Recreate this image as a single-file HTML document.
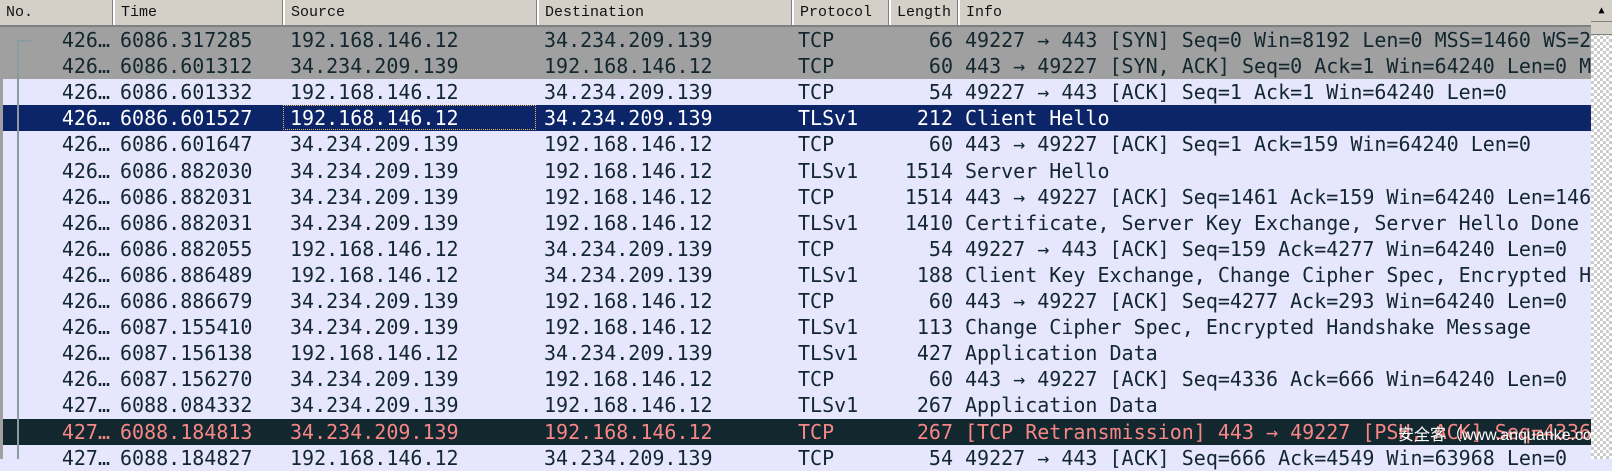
<!DOCTYPE html>
<html><head><meta charset="utf-8"><style>
body{margin:0;width:1612px;height:459px;overflow:hidden;background:#e6e6fe;position:relative;font-family:"DejaVu Sans Mono","Liberation Mono",monospace}
#hdr{position:absolute;left:0;top:0;width:1591px;height:25px;background:#d4d0c8;border-bottom:2px solid #808080;font-family:"Liberation Mono","Noto Serif CJK SC",monospace;font-size:15px;color:#111}
.h{position:absolute;top:0;height:25px;line-height:26px;padding-left:6px;box-sizing:border-box;border-left:2px solid #fff;box-shadow:-1px 0 0 #808080}
.r{position:absolute;left:0;width:1591px;height:26.1px;line-height:26px;font-size:20px;color:#12272e;white-space:pre;overflow:hidden}
.r span{position:absolute;top:0}
.g{background:#a0a0a0}
.s{background:#0c2468;color:#fff}
.d{background:#12272e;color:#f78787}
.c0{right:1481px;text-align:right}
.c1{left:120px}.c2{left:290px}.c3{left:544px}.c4{left:798px}.c5{right:638px;text-align:right}.c6{left:965px}
#sb{position:absolute;left:1591px;top:0;width:21px;height:459px;background-color:#fff;background-image:linear-gradient(45deg,#ccc 25%,transparent 25%,transparent 75%,#ccc 75%),linear-gradient(45deg,#ccc 25%,transparent 25%,transparent 75%,#ccc 75%);background-size:6px 6px;background-position:0 0,3px 3px}
</style></head><body>
<div id="hdr">
<div class="h" style="left:0;width:113px;border-left:none;box-shadow:none">No.</div>
<div class="h" style="left:113px;width:170px">Time</div>
<div class="h" style="left:283px;width:254px">Source</div>
<div class="h" style="left:537px;width:255px">Destination</div>
<div class="h" style="left:792px;width:97px">Protocol</div>
<div class="h" style="left:889px;width:69px">Length</div>
<div class="h" style="left:958px;width:633px">Info</div>
</div>
<div class="r g" style="top:27px"><span class="c0">426…</span><span class="c1">6086.317285</span><span class="c2">192.168.146.12</span><span class="c3">34.234.209.139</span><span class="c4">TCP</span><span class="c5">66</span><span class="c6">49227 → 443 [SYN] Seq=0 Win=8192 Len=0 MSS=1460 WS=256</span></div>
<div class="r g" style="top:53.1px"><span class="c0">426…</span><span class="c1">6086.601312</span><span class="c2">34.234.209.139</span><span class="c3">192.168.146.12</span><span class="c4">TCP</span><span class="c5">60</span><span class="c6">443 → 49227 [SYN, ACK] Seq=0 Ack=1 Win=64240 Len=0 MSS</span></div>
<div class="r" style="top:79.2px"><span class="c0">426…</span><span class="c1">6086.601332</span><span class="c2">192.168.146.12</span><span class="c3">34.234.209.139</span><span class="c4">TCP</span><span class="c5">54</span><span class="c6">49227 → 443 [ACK] Seq=1 Ack=1 Win=64240 Len=0</span></div>
<div class="r s" style="top:105.3px"><span class="c0">426…</span><span class="c1">6086.601527</span><span style="left:283px;width:253px;height:25px;border:1px dotted #e8c060;box-sizing:border-box"></span><span class="c2">192.168.146.12</span><span class="c3">34.234.209.139</span><span class="c4">TLSv1</span><span class="c5">212</span><span class="c6">Client Hello</span></div>
<div class="r" style="top:131.4px"><span class="c0">426…</span><span class="c1">6086.601647</span><span class="c2">34.234.209.139</span><span class="c3">192.168.146.12</span><span class="c4">TCP</span><span class="c5">60</span><span class="c6">443 → 49227 [ACK] Seq=1 Ack=159 Win=64240 Len=0</span></div>
<div class="r" style="top:157.5px"><span class="c0">426…</span><span class="c1">6086.882030</span><span class="c2">34.234.209.139</span><span class="c3">192.168.146.12</span><span class="c4">TLSv1</span><span class="c5">1514</span><span class="c6">Server Hello</span></div>
<div class="r" style="top:183.6px"><span class="c0">426…</span><span class="c1">6086.882031</span><span class="c2">34.234.209.139</span><span class="c3">192.168.146.12</span><span class="c4">TCP</span><span class="c5">1514</span><span class="c6">443 → 49227 [ACK] Seq=1461 Ack=159 Win=64240 Len=1460</span></div>
<div class="r" style="top:209.7px"><span class="c0">426…</span><span class="c1">6086.882031</span><span class="c2">34.234.209.139</span><span class="c3">192.168.146.12</span><span class="c4">TLSv1</span><span class="c5">1410</span><span class="c6">Certificate, Server Key Exchange, Server Hello Done</span></div>
<div class="r" style="top:235.8px"><span class="c0">426…</span><span class="c1">6086.882055</span><span class="c2">192.168.146.12</span><span class="c3">34.234.209.139</span><span class="c4">TCP</span><span class="c5">54</span><span class="c6">49227 → 443 [ACK] Seq=159 Ack=4277 Win=64240 Len=0</span></div>
<div class="r" style="top:261.9px"><span class="c0">426…</span><span class="c1">6086.886489</span><span class="c2">192.168.146.12</span><span class="c3">34.234.209.139</span><span class="c4">TLSv1</span><span class="c5">188</span><span class="c6">Client Key Exchange, Change Cipher Spec, Encrypted Handshake</span></div>
<div class="r" style="top:288px"><span class="c0">426…</span><span class="c1">6086.886679</span><span class="c2">34.234.209.139</span><span class="c3">192.168.146.12</span><span class="c4">TCP</span><span class="c5">60</span><span class="c6">443 → 49227 [ACK] Seq=4277 Ack=293 Win=64240 Len=0</span></div>
<div class="r" style="top:314.1px"><span class="c0">426…</span><span class="c1">6087.155410</span><span class="c2">34.234.209.139</span><span class="c3">192.168.146.12</span><span class="c4">TLSv1</span><span class="c5">113</span><span class="c6">Change Cipher Spec, Encrypted Handshake Message</span></div>
<div class="r" style="top:340.2px"><span class="c0">426…</span><span class="c1">6087.156138</span><span class="c2">192.168.146.12</span><span class="c3">34.234.209.139</span><span class="c4">TLSv1</span><span class="c5">427</span><span class="c6">Application Data</span></div>
<div class="r" style="top:366.3px"><span class="c0">426…</span><span class="c1">6087.156270</span><span class="c2">34.234.209.139</span><span class="c3">192.168.146.12</span><span class="c4">TCP</span><span class="c5">60</span><span class="c6">443 → 49227 [ACK] Seq=4336 Ack=666 Win=64240 Len=0</span></div>
<div class="r" style="top:392.4px"><span class="c0">427…</span><span class="c1">6088.084332</span><span class="c2">34.234.209.139</span><span class="c3">192.168.146.12</span><span class="c4">TLSv1</span><span class="c5">267</span><span class="c6">Application Data</span></div>
<div class="r d" style="top:418.5px"><span class="c0">427…</span><span class="c1">6088.184813</span><span class="c2">34.234.209.139</span><span class="c3">192.168.146.12</span><span class="c4">TCP</span><span class="c5">267</span><span class="c6">[TCP Retransmission] 443 → 49227 [PSH, ACK] Seq=4336 Ack</span></div>
<div class="r" style="top:444.6px"><span class="c0">427…</span><span class="c1">6088.184827</span><span class="c2">192.168.146.12</span><span class="c3">34.234.209.139</span><span class="c4">TCP</span><span class="c5">54</span><span class="c6">49227 → 443 [ACK] Seq=666 Ack=4549 Win=63968 Len=0</span></div>
<div style="position:absolute;left:1398px;top:426px;font-family:'Liberation Sans','Noto Sans CJK SC',sans-serif;font-size:16px;color:#fff;white-space:nowrap;width:193px;overflow:hidden;line-height:20px">安全客（www.anquanke.com</div>
<div style="position:absolute;left:0;top:27px;width:3px;height:432px;background:#a0a0a0"></div>
<div style="position:absolute;left:17px;top:40px;width:14px;height:2px;background:#8a9aa0"></div>
<div style="position:absolute;left:17px;top:40px;width:2px;height:419px;background:#8a9aa0"></div>
<div id="sb"><div style="height:21px;background:#d4d0c8;border-bottom:1px solid #808080;text-align:center;font-size:10px;line-height:21px;color:#000">▲</div><div style="height:12px;background:#d4d0c8;border-bottom:1px solid #808080"></div></div>
</body></html>
